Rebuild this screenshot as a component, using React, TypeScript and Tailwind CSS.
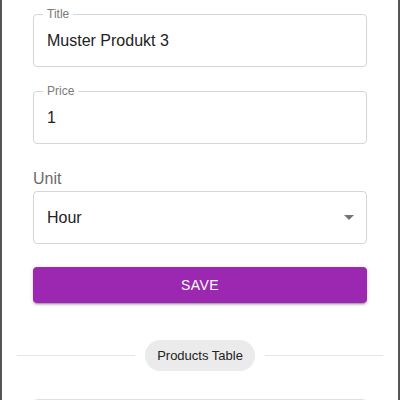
import React from "react";

function Outlined({ label, value }: { label: string; value: string }) {
  return (
    <div className="relative h-[53px] rounded-[4px] border border-[#d6d6d6]">
      <span className="absolute left-[9px] top-[-8px] bg-white px-[4px] text-[12px] leading-[14px] text-[#7a7a7a]">
        {label}
      </span>
      <div className="flex h-full items-center pl-[13px] text-[16px] text-[#222]">{value}</div>
    </div>
  );
}

export default function App() {
  return (
    <div
      className="h-[400px] w-[400px] overflow-hidden border-x-2 border-[#555] bg-white"
      style={{ fontFamily: '"Liberation Sans", Arial, sans-serif' }}
    >
      <div className="flex flex-col px-[31px] pt-[14px]">
        <Outlined label="Title" value="Muster Produkt 3" />
        <div className="h-[24px]" />
        <Outlined label="Price" value="1" />
        <div className="mt-[25px] text-[16px] leading-[20px] text-[#6b6b6b]">Unit</div>
        <div className="mt-[2px] flex h-[53px] items-center justify-between rounded-[4px] border border-[#d6d6d6] pl-[13px] pr-[12px] text-[16px] text-[#222]">
          <span>Hour</span>
          <svg width="10" height="5" viewBox="0 0 10 5">
            <path d="M0 0 L5 5 L10 0 Z" fill="#757575" />
          </svg>
        </div>
        <button className="mt-[23px] flex h-[36px] items-center justify-center rounded-[4px] bg-[#9c27b0] text-[14px] tracking-[0.4px] text-white shadow-[0_3px_1px_-2px_rgba(0,0,0,0.2),0_2px_2px_0_rgba(0,0,0,0.14),0_1px_5px_0_rgba(0,0,0,0.12)]">
          SAVE
        </button>
      </div>
      <div className="mt-[37px] flex items-center px-[15px]">
        <div className="h-px flex-1 bg-[#e6e6e6]" />
        <div className="mx-[10px] flex h-[31px] items-center rounded-full bg-[#ebebeb] px-[12px] text-[13px] text-[#222]">
          Products Table
        </div>
        <div className="h-px flex-1 bg-[#e6e6e6]" />
      </div>
      <div className="mx-[31px] mt-[28px] h-[20px] rounded-t-[4px] border border-[#e0e0e0]" />
    </div>
  );
}
